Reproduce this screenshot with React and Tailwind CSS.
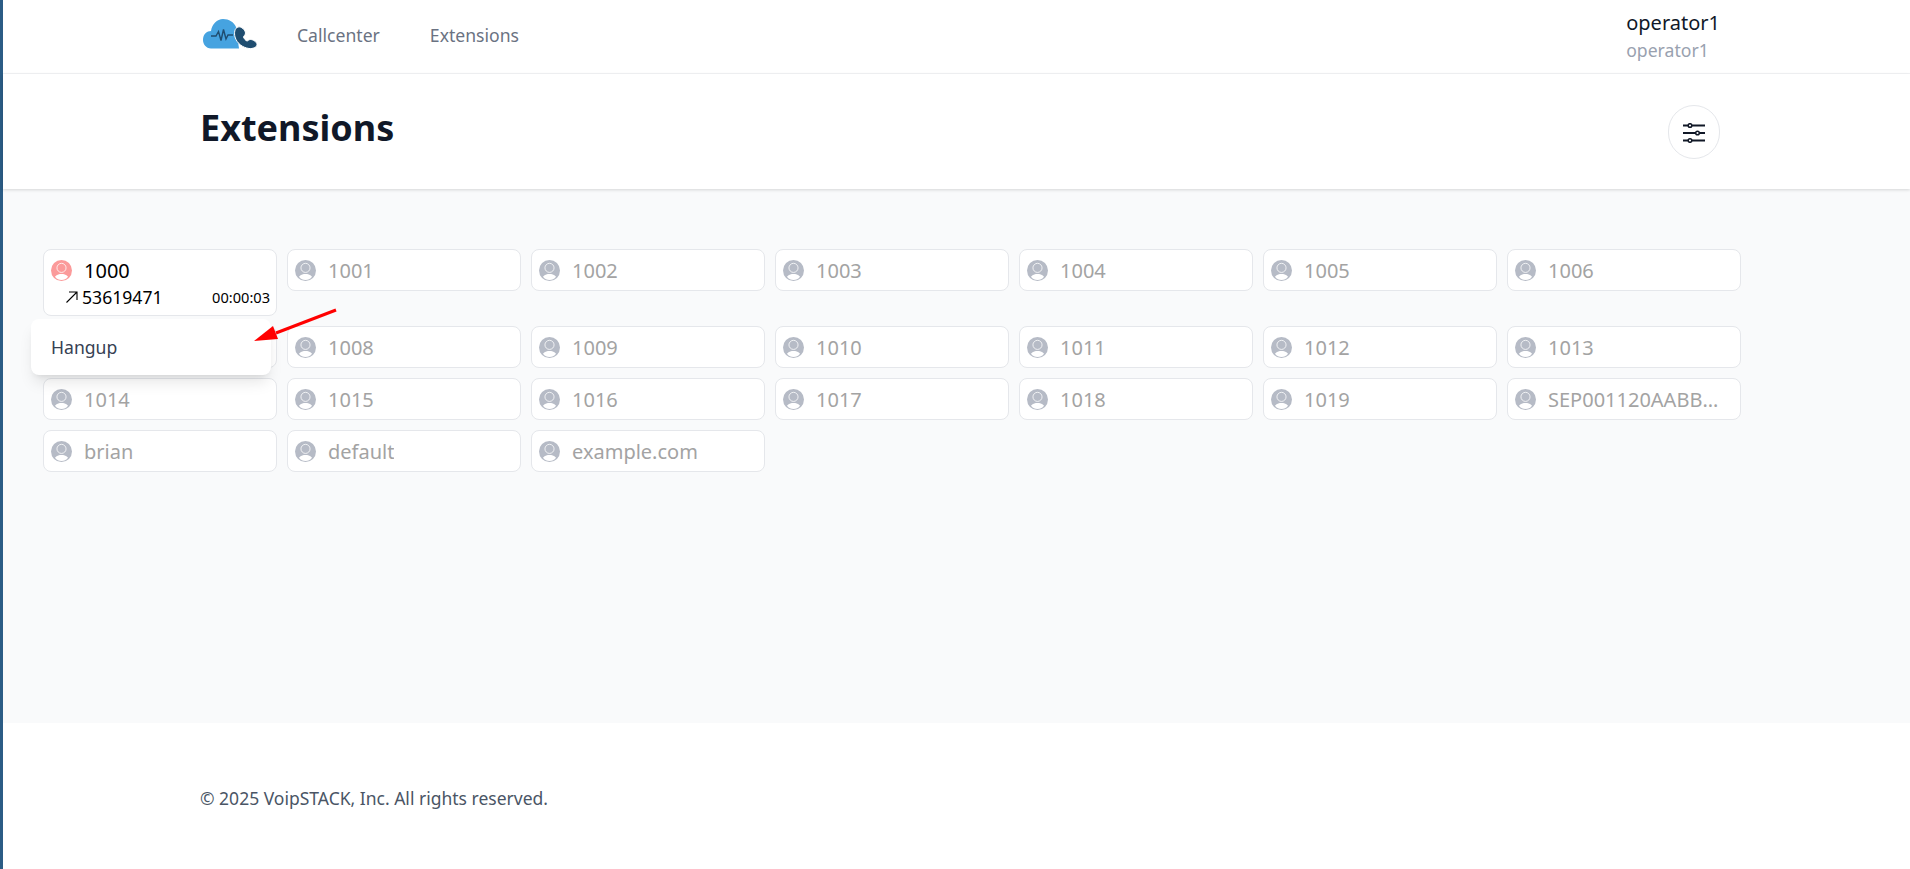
import React from "react";

const extensions = [
  "1001", "1002", "1003", "1004", "1005", "1006", "1007", "1008", "1009", "1010", "1011", "1012", "1013",
  "1014", "1015", "1016", "1017", "1018", "1019", "SEP001120AABBCCDD", "brian", "default", "example.com",
];

const Logo = () => (
  <svg viewBox="0 0 54 30" className="w-[54px] h-[30px] mb-[3px]">
    <path d="M8 29.5 C3 29.5 0 25 0 21 C0 15 4 12 8 12 C9 5 14 0 20 0 C26 0 31 3 33 8 L36 29.5 Z" fill="#46a3e0" />
    <path d="M8 17 H13 L15.5 12.5 L18 21.5 L20.5 10.5 L23 20 L25 16 H30" fill="none" stroke="#1f4d70" strokeWidth="1.4" />
    <path d="M35 8 C31.5 9 31 14 32 18 C34 24.5 39.5 28.5 46 29.5 C50 30 54 28 54 25.5 C54 23 50 20.5 47.5 20.5 C45.5 20.5 45 22 44 22 C42.5 21.5 41 19.5 40.5 18 C40.5 17 42.5 16 42.5 14 C42.5 11.5 38.5 7 35 8Z" fill="#1f4d70" stroke="#fff" strokeWidth="1" />
  </svg>
);

const UserIcon = ({ className }) => (
  <svg viewBox="0 0 24 24" className={`shrink-0 w-[21px] h-[21px] ${className}`}>
    <circle cx="12" cy="12" r="12" fill="currentColor" />
    <circle cx="12" cy="9" r="5.2" fill="currentColor" stroke="#fff" strokeWidth="0.9" />
    <path d="M4.5 19 C7 16.5 9.5 16 12 16 C14.5 16 17 16.5 19.5 19 C17.5 21.5 15 22.8 12 22.8 C9 22.8 6.5 21.5 4.5 19Z" fill="#fff" />
  </svg>
);

const SlidersIcon = () => (
  <svg viewBox="0 0 22 20" className="w-[22px] h-[20px] mt-[2px]" fill="none" stroke="#111827">
    <path d="M0 2.5 H22 M0 10 H22 M0 17.5 H22" strokeWidth="1.8" />
    <circle cx="7" cy="2.5" r="1.8" fill="#fff" strokeWidth="1.5" />
    <circle cx="14.5" cy="10" r="1.8" fill="#fff" strokeWidth="1.5" />
    <circle cx="7" cy="17.5" r="1.8" fill="#fff" strokeWidth="1.5" />
  </svg>
);

const ArrowIcon = () => (
  <svg viewBox="0 0 14 14" className="w-[14px] h-[14px]" fill="none" stroke="#000" strokeWidth="1.1">
    <path d="M1.5 12.5 L12 2 M4 2 H12 V10" />
  </svg>
);

const ActiveCard = () => (
  <div className="relative bg-white border border-gray-200 rounded-lg h-[67px] pl-[7px] pr-[6px]">
    <div className="flex items-center gap-[12px] h-[39px] pt-[1px]">
      <UserIcon className="text-[#fb9a9a]" />
      <span className="text-[20px] text-black pt-[1px]">1000</span>
    </div>
    <div className="flex items-center justify-between pl-[14px] -mt-[2px]">
      <div className="flex items-center gap-[3px]">
        <ArrowIcon />
        <span className="text-[17.6px] leading-5 text-black">53619471</span>
      </div>
      <span className="text-[14.6px] leading-5 text-black">00:00:03</span>
    </div>
    <div className="absolute z-10 left-[-13px] top-[69px] w-[240px] h-[56px] bg-white rounded-lg shadow-lg flex items-center px-[20px]">
      <span className="text-[17.6px] text-gray-700">Hangup</span>
    </div>
  </div>
);

const ExtensionCard = ({ name }) => (
  <div className="bg-white border border-gray-200 rounded-lg h-[42px] pl-[7px] pr-[20px] flex items-center gap-[12px]">
    <UserIcon className="text-[#b6bbc6]" />
    <span className="text-[20px] text-[#a3a3a3] truncate pt-[1px]">{name}</span>
  </div>
);

export default function App() {
  return (
    <div className="relative min-h-screen flex flex-col bg-white border-l-[3px] border-[#2b5c85] font-['Noto_Sans',sans-serif]">
      <nav className="h-[74px] border-b border-gray-100 pl-[200px] pr-[190px] flex items-center justify-between">
        <div className="flex items-center pb-[2px]">
          <Logo />
          <a className="ml-[40px] text-[17.6px] text-gray-500">Callcenter</a>
          <a className="ml-[50px] text-[17.6px] text-gray-500">Extensions</a>
        </div>
        <div className="flex flex-col">
          <span className="text-[20px] leading-7 text-gray-900">operator1</span>
          <span className="text-[17.6px] leading-[26px] mb-[2px] text-gray-400">operator1</span>
        </div>
      </nav>

      <header className="h-[115px] shadow-[0_1px_3px_rgba(0,0,0,0.15)] z-[1] bg-white pl-[197px] pr-[190px] flex items-center justify-between">
        <h1 className="text-4xl font-bold text-gray-900 mb-[7px]">Extensions</h1>
        <button className="w-[52px] h-[54px] rounded-full border border-gray-200 flex items-center justify-center">
          <SlidersIcon />
        </button>
      </header>

      <main className="flex-1 bg-gray-50 pt-[60px] pl-[40px]">
        <div className="grid grid-cols-[repeat(7,234px)] gap-[10px] items-start">
          <ActiveCard />
          {extensions.map((name) => (
            <ExtensionCard key={name} name={name} />
          ))}
        </div>
      </main>

      <footer className="h-[146px] pl-[197px] pt-[4px] flex items-center">
        <p className="text-[17.5px] text-gray-600">© 2025 VoipSTACK, Inc. All rights reserved.</p>
      </footer>

      {/* red annotation arrow */}
      <svg className="absolute left-[247px] top-[305px] w-[90px] h-[40px] z-20" viewBox="0 0 90 40">
        <path d="M86 5 L26 28" stroke="#ff0000" strokeWidth="3" />
        <path d="M4 36 L23 21 L28 34 Z" fill="#ff0000" />
      </svg>
    </div>
  );
}
